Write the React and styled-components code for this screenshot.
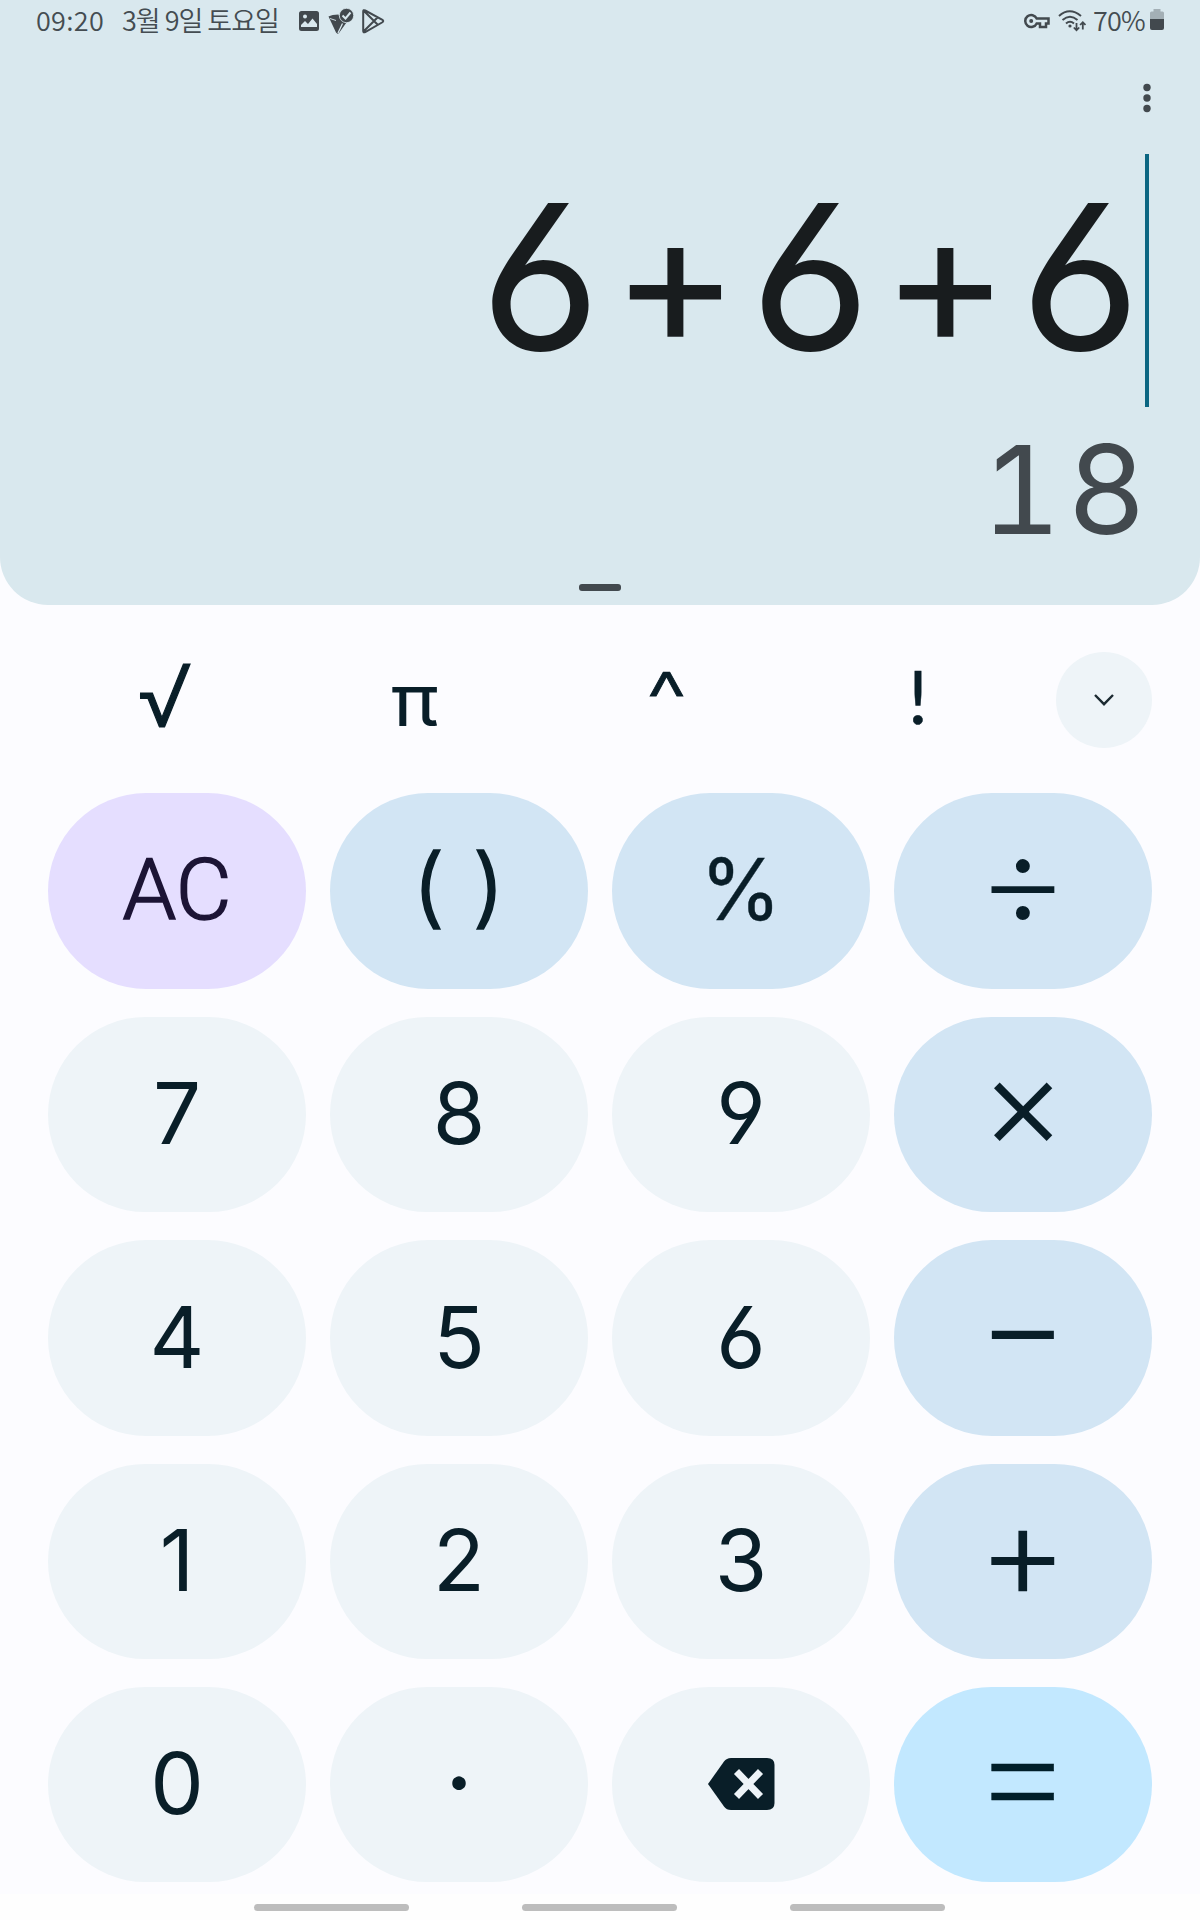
import React, { useState } from 'react'
import styled, { createGlobalStyle } from 'styled-components';

const GlobalStyle = createGlobalStyle`
  * {
    box-sizing: border-box;
  }
  body {
    margin: 0;
    background: #fcfcff;
    font-family: 'Inter', 'Noto Sans', sans-serif;
  }
`;

const Screen = styled.div`
  width: 1200px;
  height: 1920px;
  display: flex;
  flex-direction: column;
  background: #fcfcff;
  overflow: hidden;
`;

const Display = styled.header`
  height: 605px;
  display: flex;
  flex-direction: column;
  background: #d9e8ee;
  border-radius: 0 0 48px 48px;
`;

const StatusBar = styled.div`
  height: 42px;
  display: flex;
  align-items: center;
  justify-content: space-between;
  padding: 0 36px;
  color: #444c51;
  font-family: 'Noto Sans CJK KR', 'Noto Sans', sans-serif;
  font-size: 27px;
  font-weight: 350;
  line-height: 40px;
`;

const StatusGroup = styled.div`
  display: flex;
  align-items: center;
`;

const StatusText = styled.span`
  width: ${({ $width }) => $width}px;
  margin-right: ${({ $gap }) => $gap || 0}px;
  padding-bottom: 2px;
  letter-spacing: ${({ $spacing }) => $spacing || 0}px;
  white-space: nowrap;
`;

const StatusIcon = styled.svg`
  display: block;
  width: ${({ $width }) => $width}px;
  height: 28px;
  margin-right: ${({ $gap }) => $gap || 0}px;
`;

const MenuRow = styled.div`
  height: 112px;
  display: flex;
  justify-content: flex-end;
  padding: 40px 47px 0 0;
`;

const MenuButton = styled.button`
  width: 12px;
  height: 32px;
  padding: 0;
  border: 0;
  background: none;
`;

const ExpressionRow = styled.div`
  height: 253px;
  display: flex;
  justify-content: flex-end;
  padding-right: 51px;
`;

const Expression = styled.div`
  display: flex;
  align-items: baseline;
  margin-right: -3px;
  font-size: 202px;
  line-height: 246px;
  color: #181c1e;
  font-feature-settings: 'cv03', 'cv04', 'tnum';
`;

const ExpressionChar = styled.span`
  width: 135px;
  text-align: center;
  font-size: ${({ $operator }) => ($operator ? 188 : 202)}px;
  transform: translateY(${({ $operator }) => ($operator ? -4 : 0)}px) scaleX(1.03);
`;

const Cursor = styled.div`
  width: 4px;
  height: 253px;
  background: #0b6682;
`;

const Result = styled.div`
  height: 177px;
  padding-right: 48px;
  font-size: 123px;
  line-height: 166px;
  letter-spacing: 5.5px;
  text-align: right;
  color: #42494e;
  font-feature-settings: 'tnum';
`;

const Handle = styled.div`
  width: 42px;
  height: 7px;
  border-radius: 3px;
  align-self: center;
  background: #42494e;
`;

const FunctionRow = styled.div`
  height: 188px;
  display: flex;
  align-items: center;
  padding: 2px 48px 0 36px;
`;

const FunctionKey = styled.button`
  width: 252px;
  height: 96px;
  display: flex;
  align-items: center;
  justify-content: center;
  padding: 0;
  border: 0;
  background: none;
  color: #091e28;
`;

const ExpandButton = styled.button`
  width: 96px;
  height: 96px;
  margin-left: auto;
  padding: 0;
  border: 0;
  border-radius: 50%;
  display: flex;
  align-items: center;
  justify-content: center;
  background: #eef4f8;
`;

const Keypad = styled.main`
  height: 1089px;
  display: grid;
  grid-template-columns: repeat(4, 258px);
  grid-template-rows: 196px 195px 196px 195px 195px;
  gap: 28px 24px;
  padding: 0 48px;
`;

const keyColors = {
  number: ['#eef4f8', '#091e28'],
  operator: ['#d2e5f4', '#091e28'],
  clear: ['#e5deff', '#1c1435'],
  equals: ['#c2e8ff', '#001f2a'],
};

const Key = styled.button`
  display: flex;
  align-items: center;
  justify-content: center;
  padding: 0 0 1px;
  border: 0;
  border-radius: 98px;
  background: ${({ $kind }) => keyColors[$kind][0]};
  color: ${({ $kind }) => keyColors[$kind][1]};
`;

const Glyph = styled.span`
  font-family: ${({ $font }) => $font || 'Inter'}, 'Noto Sans', sans-serif;
  font-size: ${({ $size }) => $size || 85}px;
  font-weight: ${({ $weight }) => $weight || 400};
  font-feature-settings: 'cv03', 'cv04';
  line-height: 96px;
  white-space: pre;
  -webkit-text-stroke: ${({ $stroke }) => $stroke || 0}px currentColor;
  transform: translate(${({ $nudge }) => $nudge || 0}px, ${({ $shift }) => $shift || 0}px) scaleX(${({ $stretch }) => $stretch || 1});
`;

const NavBar = styled.footer`
  height: 26px;
  display: flex;
  justify-content: center;
  gap: 113px;
  margin-top: 12px;
  padding: 10px 1px 0 0;
  background: #fefefe;
`;

const NavPill = styled.div`
  width: 155px;
  height: 7px;
  border-radius: 3.5px;
  background: #bdbdbd;
`;

const functions = [
  { label: '√', size: 87, weight: 300, stroke: 1.2, nudge: 3, shift: -4 },
  { label: 'π', size: 72, stretch: 1.1, nudge: 1 },
  { label: '^', size: 78, weight: 300, stroke: 0.8, stretch: 1.16, shift: -1 },
  { label: '!', font: 'Lato', size: 74, shift: -4, stroke: 0.5 },
];

const keys = [
  { label: 'AC', kind: 'clear', font: 'Roboto', size: 86, weight: 300, stroke: 1.6, shift: -1 },
  { label: '( )', kind: 'operator', size: 87, weight: 300, stroke: 1.5, stretch: 1.1, shift: -5 },
  { label: '%', kind: 'operator', size: 85, stretch: 0.97, stroke: 0.4, shift: -1 },
  { label: '÷', kind: 'operator', font: 'Lato', size: 130, weight: 300, stroke: 1.8, shift: -8 },
  { label: '7', kind: 'number' },
  { label: '8', kind: 'number' },
  { label: '9', kind: 'number' },
  { label: '×', kind: 'operator', size: 131, weight: 300, shift: -12 },
  { label: '4', kind: 'number' },
  { label: '5', kind: 'number' },
  { label: '6', kind: 'number' },
  { label: '−', kind: 'operator', size: 131, weight: 300, stretch: 1.07, shift: -13 },
  { label: '1', kind: 'number' },
  { label: '2', kind: 'number' },
  { label: '3', kind: 'number' },
  { label: '+', kind: 'operator', size: 134, weight: 300, stretch: 1.04, shift: -11 },
  { label: '0', kind: 'number' },
  { label: '.', kind: 'number', font: 'Lato', size: 108, shift: -37 },
  { label: 'del', kind: 'number' },
  { label: '=', kind: 'equals', font: 'Lato', size: 185, weight: 300, stretch: 0.81, stroke: 0.6, shift: -11 },
];

const BackspaceIcon = () => (
  <svg width="68" height="54" viewBox="0 0 68 54">
    <path d="M1 27 L17 4.5 Q19.500 1 24 1 H60 Q67.500 1 67.500 8 V46 Q67.500 53 60 53 H24 Q19.500 53 17 49.500 Z" fill="#091e28" />
    <path d="M29.500 14.500 L53.500 39.500 M53.500 14.500 L29.500 39.500" stroke="#eef4f8" strokeWidth="7" />
  </svg>
);

const App = () => {

  const [expression, setExpression] = useState('6+6+6');
  const [result, setResult] = useState('18');

  const handleKey = (label) => {
    if (label === 'AC') {
      setExpression('');
      setResult('');
    } else if (label === 'del') {
      setExpression(expression.slice(0, -1));
    } else if (label !== '=') {
      setExpression(expression + label);
    }
  };

  return (
    <>
      <GlobalStyle />
      <Screen>
        <Display>
          <StatusBar>
            <StatusGroup>
              <StatusText $width={67} $gap={19} $spacing={0.3}>09:20</StatusText>
              <StatusText $width={157} $gap={20} $spacing={-1}>3월 9일 토요일</StatusText>
              {/* gallery */}
              <StatusIcon $width={20} $gap={9} viewBox="0 0 20 28">
                <path fillRule="evenodd" fill="#42494e" d="M2.500 4 H17.500 Q20 4 20 6.500 V21.500 Q20 24 17.500 24 H2.500 Q0 24 0 21.500 V6.500 Q0 4 2.500 4 Z M2 20 H18 V17 L13.500 11.500 L9 17 L6 14 L2 18 Z M6 7.500 A2 2 0 1 0 6 11.500 A2 2 0 1 0 6 7.500 Z" />
              </StatusIcon>
              {/* paper cone with a check badge */}
              <StatusIcon $width={26} $gap={8} viewBox="0 0 26 28">
                <path d="M0.500 9.500 Q4 7.500 10.500 7.500 Q12 14 18.500 15.500 L11 26 Q9.500 27.500 8 25.500 Z" fill="#42494e" />
                <path d="M10 26 L14.500 16.500" fill="none" stroke="#d9e8ee" strokeWidth="1.300" />
                <path d="M2 11.500 L8 13.500" fill="none" stroke="#d9e8ee" strokeWidth="0.900" />
                <circle cx="18.500" cy="8.500" r="7.200" fill="#42494e" stroke="#d9e8ee" strokeWidth="0.800" />
                <path d="M14.500 8.500 L17.500 11.500 L22.500 5.500" fill="none" stroke="#d9e8ee" strokeWidth="2" />
              </StatusIcon>
              {/* play store */}
              <StatusIcon $width={23} viewBox="0 0 23 28">
                <path d="M1.200 4.500 Q1.200 2.500 3.200 3.500 L20 12.500 Q22.500 14 20 15.500 L3.200 25 Q1.200 26 1.200 24 Z M2 4 L15.500 17.500 M2 24 L15.500 10.500" fill="none" stroke="#42494e" strokeWidth="2" />
              </StatusIcon>
            </StatusGroup>
            <StatusGroup>
              {/* vpn key */}
              <StatusIcon $width={26} $gap={8} viewBox="0 0 26 28">
                <path d="M12.700 11.500 A6 6 0 1 0 12.700 16.500 H16 V20 H22 V16.500 H24.500 V11.500 Z" fill="none" stroke="#42494e" strokeWidth="2.500" />
                <circle cx="7.200" cy="14" r="2" fill="#42494e" />
              </StatusIcon>
              {/* wifi */}
              <StatusIcon $width={28} $gap={7} viewBox="0 0 28 28">
                <path d="M1 9 Q11.500 -0.500 23 9 M4.500 13 Q12 6.500 19.500 13 M8 16.500 Q12 13 16 16.500" fill="none" stroke="#42494e" strokeWidth="2" />
                <circle cx="12" cy="19" r="1.600" fill="#42494e" />
                <path d="M18.500 16 V23 M15.800 20.500 L18.500 23.300 L21.200 20.500 M24.800 22.500 V15.500 M22.100 18 L24.800 15.200 L27.500 18" fill="none" stroke="#42494e" strokeWidth="1.800" />
              </StatusIcon>
              <StatusText $width={51} $gap={6} $spacing={-0.8}>70%</StatusText>
              {/* battery */}
              <StatusIcon $width={14} viewBox="0 0 14 28">
                <path d="M0 6 Q0 4.500 1.500 4.500 H3.500 V2 H10.500 V4.500 H12.500 Q14 4.500 14 6 V12 H0 Z" fill="#a3afb5" />
                <path d="M0 12 H14 V21 Q14 23 12 23 H2 Q0 23 0 21 Z" fill="#42494e" />
              </StatusIcon>
            </StatusGroup>
          </StatusBar>

          <MenuRow>
            <MenuButton aria-label="menu">
              <svg width="12" height="32" viewBox="0 0 12 32" fill="#42494e">
                <circle cx="6" cy="5.500" r="3.700" />
                <circle cx="6" cy="16" r="3.700" />
                <circle cx="6" cy="26.500" r="3.700" />
              </svg>
            </MenuButton>
          </MenuRow>

          <ExpressionRow>
            <Expression>
              {expression.split('').map((char, index) => (
                <ExpressionChar key={index} $operator={'+−×÷'.includes(char)}>{char}</ExpressionChar>
              ))}
            </Expression>
            <Cursor />
          </ExpressionRow>
          <Result>{result}</Result>
          <Handle />
        </Display>

        <FunctionRow>
          {functions.map((item) => (
            <FunctionKey key={item.label} onClick={() => handleKey(item.label)}>
              <Glyph $font={item.font} $size={item.size} $weight={item.weight} $stretch={item.stretch} $stroke={item.stroke} $nudge={item.nudge} $shift={item.shift}>{item.label}</Glyph>
            </FunctionKey>
          ))}
          <ExpandButton aria-label="more">
            <svg width="24" height="16" viewBox="0 0 24 16">
              <path d="M3 3 L12 12.200 L21 3" fill="none" stroke="#1c2a32" strokeWidth="2.400" />
            </svg>
          </ExpandButton>
        </FunctionRow>

        <Keypad>
          {keys.map((item) => (
            <Key key={item.label} $kind={item.kind} onClick={() => handleKey(item.label)}>
              {item.label === 'del' ? <BackspaceIcon /> : (
                <Glyph $font={item.font} $size={item.size} $weight={item.weight} $stretch={item.stretch} $stroke={item.stroke} $shift={item.shift}>{item.label}</Glyph>
              )}
            </Key>
          ))}
        </Keypad>

        <NavBar>
          <NavPill />
          <NavPill />
          <NavPill />
        </NavBar>
      </Screen>
    </>
  )

}

export default App;
